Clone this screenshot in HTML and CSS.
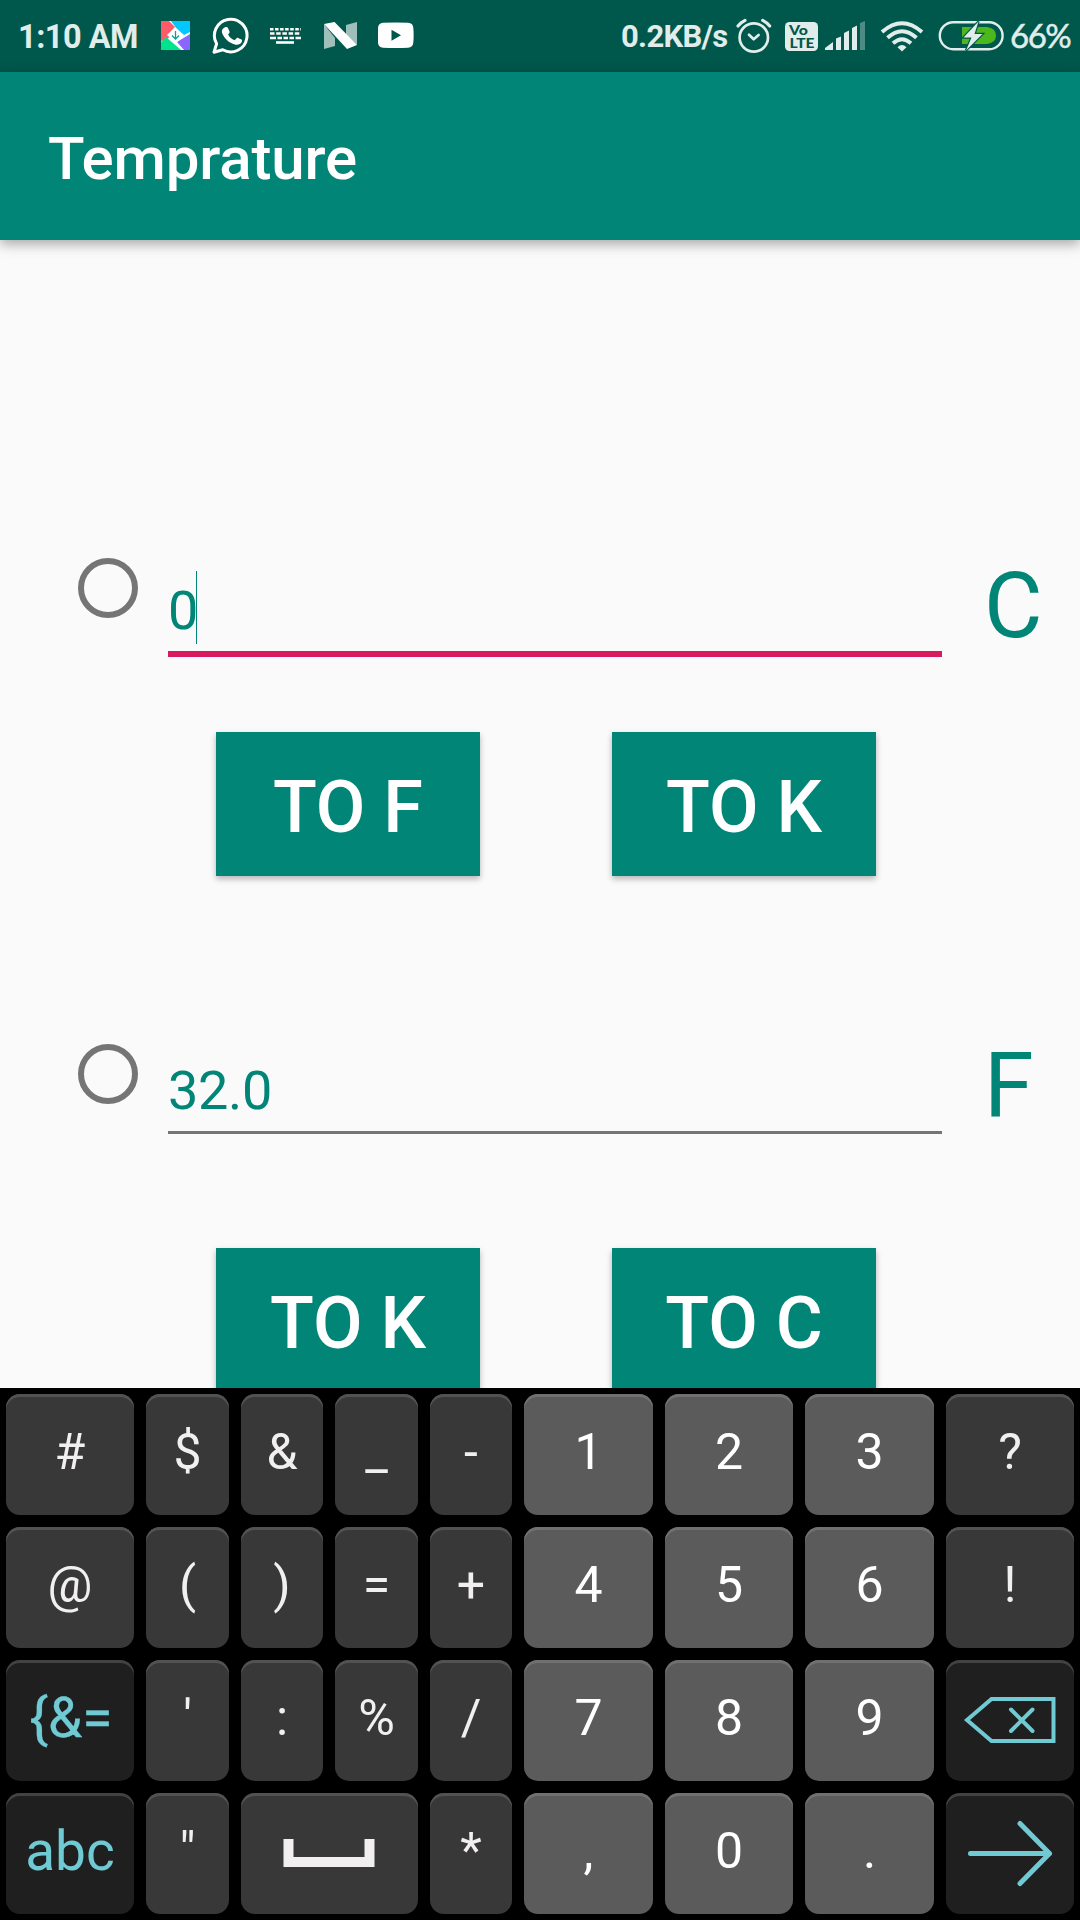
FILE: index.html
```html
<!DOCTYPE html>
<html lang="en">
<head>
<meta charset="utf-8">
<title>Temprature</title>
<link rel="stylesheet" href="styles.css">
</head>
<body>
<div class="screen">
  <div class="status">
    <span class="clock">1:10 AM</span>
    <svg class="icon-files" width="30" height="72" viewBox="161 0 30 72">
      <path fill="#fff" d="M161 21h29v29h-29z"/>
      <path fill="#ff5a68" d="M161 21h8l9 9-12 10-5 1z"/>
      <path fill="#00c8ff" d="M171 21h19v11l-8 4z"/>
      <path fill="#8b65ff" d="M190 34v16h-6l-7-8z"/>
      <path fill="#00e38d" d="M161 42l5-5 15 13h-20z"/>
      <path fill="#fff" d="M175 27l9 8-8 8-9-8z"/>
      <path fill="none" stroke="#00a69b" stroke-width="1.3" d="M175.500 31v8M172 35.500l3.500 3.500 3.500-3.500"/>
    </svg>
    <svg class="icon-chat" width="38" height="72" viewBox="212 0 38 72">
      <path fill="none" stroke="#fff" stroke-width="3" stroke-linejoin="round" d="M214 52.200l2.600-8.500a16.300 16.300 0 1 1 6.200 6.100z"/>
      <path fill="#fff" d="M225 27.300c1.500-.8 2.500-.4 3 .7l1.500 3.500c.4 1-.1 1.600-1.400 3 1.500 2.800 3.500 4.600 6.500 5.800l2-2.100c.4-.5.9-.6 1.500-.3l3.400 1.700c.8.500.6 1.500.2 2.500-1 2.200-3.600 3.100-6 2.600-6.300-1.300-11.500-6-13.600-11.700-.8-2.300.7-4.800 2.900-5.700z"/>
    </svg>
    <svg class="icon-keys" width="32" height="72" viewBox="270 0 32 72" fill="none" stroke="#fff" stroke-width="2.600">
      <path stroke-dasharray="3.500 1.550" d="M270 29.300h31"/>
      <path stroke-dasharray="4.500 1.700" d="M270 33.500h31"/>
      <path stroke-dasharray="6 1.500 4.500 1.500 4.500 1.500 4.500 1.500 6" d="M270 38h31"/>
      <path d="M276 42.500h18"/>
    </svg>
    <svg class="icon-n" width="34" height="72" viewBox="324 0 34 72" fill="#fff">
      <path opacity=".62" d="M324 24l11 14v8l-11 3zM346 25l11-3v23l-11-10z"/>
      <path d="M324 24l10.500-2 22.500 23-10 4z"/>
    </svg>
    <svg class="icon-play" width="36" height="72" viewBox="378 0 36 72">
      <path fill="#fff" d="M383 22.800q12.500-.8 25 0 5 .2 5.300 5 .7 7.500 0 15-.4 4.600-5.300 4.900-12.500.8-25 0-4.600-.3-5-4.900-.7-7.500 0-15 .4-4.700 5-5z"/>
      <path fill="#00574b" d="M391.500 29.800l9.500 5.400-9.500 5.500z"/>
    </svg>
    <span class="speed">0.2KB/s</span>
    <svg class="icon-alarm" width="36" height="72" viewBox="736 0 36 72" fill="none" stroke="#e0edeb" stroke-width="2.700" stroke-linecap="round" stroke-linejoin="round">
      <circle cx="753.800" cy="37.500" r="14.200"/>
      <path d="M749 34.800l4.700 4.500 4.900-4.300"/>
      <path stroke-width="3.200" d="M738 26q3-3.600 7-5.600M769.700 26q-3-3.600-7-5.600"/>
    </svg>
    <svg class="icon-volte" width="34" height="72" viewBox="785 0 34 72">
      <rect x="785" y="22" width="33" height="29" rx="4.500" fill="#e0edeb"/>
      <text class="volte-text" x="789" y="34.800" textLength="19" lengthAdjust="spacingAndGlyphs">Vo</text>
      <text class="volte-text" x="789.500" y="47.800" textLength="25" lengthAdjust="spacingAndGlyphs">LTE</text>
    </svg>
    <svg class="icon-signal" width="41" height="72" viewBox="825 0 41 72" fill="#e0edeb">
      <path d="M825 50v-2l8-6v8zM836 50v-11.500l5-2v13.500zM844 50v-17l5-2.500v19.500zM852 50v-22l5-2.500v24.500z"/>
      <path opacity=".35" d="M860 50v-27l5-2v29z"/>
    </svg>
    <svg class="icon-wifi" width="44" height="72" viewBox="880 0 44 72" fill="none" stroke="#e0edeb" stroke-width="3.900">
      <path d="M882 32q20-17.500 40 0M887.500 37.800q14.500-13.200 29 0M893 43.300q9-8.200 18 0"/>
      <path fill="#e0edeb" stroke="none" d="M897.500 47.200q4.500-4.400 9 0l-4.500 4.200z"/>
    </svg>
    <svg class="icon-battery" width="66" height="72" viewBox="938 0 66 72">
      <rect x="939.800" y="22.200" width="62.800" height="27" rx="13.500" fill="none" stroke="#e0edeb" stroke-width="2.400"/>
      <path fill="#4cb81e" d="M962 27h25q9 1 9 8.500t-9 8.500h-25z"/>
      <path fill="#e0edeb" stroke="#00574b" stroke-width="2.400" paint-order="stroke" d="M978.500 21.500L963.500 37.500h8l-5.500 13 16.500-16.500h-8z"/>
    </svg>
    <span class="percent">66%</span>
  </div>
  <header class="appbar"><h1 class="title">Temprature</h1></header>
  <main class="content">
    <div class="entry entry-celsius">
      <span class="radio"></span>
      <div class="field field-active"><span class="value">0</span><span class="caret"></span></div>
      <span class="unit">C</span>
    </div>
    <div class="actions actions-celsius">
      <button class="action">TO F</button>
      <button class="action">TO K</button>
    </div>
    <div class="entry entry-fahrenheit">
      <span class="radio"></span>
      <div class="field"><span class="value">32.0</span></div>
      <span class="unit">F</span>
    </div>
    <div class="actions actions-fahrenheit">
      <button class="action">TO K</button>
      <button class="action">TO C</button>
    </div>
  </main>
  <div class="keyboard">
    <span class="key">#</span><span class="key">$</span><span class="key">&amp;</span><span class="key">_</span><span class="key">-</span><span class="key digit">1</span><span class="key digit">2</span><span class="key digit">3</span><span class="key">?</span>
    <span class="key">@</span><span class="key">(</span><span class="key">)</span><span class="key">=</span><span class="key">+</span><span class="key digit">4</span><span class="key digit">5</span><span class="key digit">6</span><span class="key">!</span>
    <span class="key mode symbols">{&amp;=</span><span class="key">'</span><span class="key">:</span><span class="key">%</span><span class="key">/</span><span class="key digit">7</span><span class="key digit">8</span><span class="key digit">9</span>
    <span class="key mode graphic">
      <svg width="128" height="121" viewBox="946 1660 128 121" fill="none" stroke="#70cad4" stroke-width="4">
        <path d="M967 1720l24.500-21h62v42h-62z"/>
        <path stroke-linecap="round" d="M1011 1709.500l21.500 21.500M1032.500 1709.500l-21.500 21.500"/>
      </svg>
    </span>
    <span class="key mode">abc</span><span class="key">"</span>
    <span class="key space graphic">
      <svg width="177" height="121" viewBox="241 1793 177 121" fill="none" stroke="#f1eff0" stroke-width="10">
        <path d="M288.500 1839v23h81v-23"/>
      </svg>
    </span>
    <span class="key">*</span><span class="key digit">,</span><span class="key digit">0</span><span class="key digit">.</span>
    <span class="key mode graphic">
      <svg width="128" height="121" viewBox="946 1793 128 121" fill="none" stroke="#70cad4" stroke-width="5" stroke-linecap="round" stroke-linejoin="round">
        <path d="M970.500 1853.500h79M1020 1823.500l29.500 30-29.500 30"/>
      </svg>
    </span>
  </div>
</div>
</body>
</html>
```
FILE: styles.css
```css
* {
  box-sizing: border-box;
}

body {
  margin: 0;
  font-family: Roboto, "Liberation Sans", sans-serif;
}

.screen {
  display: flex;
  flex-direction: column;
  width: 1080px;
  height: 1920px;
  overflow: hidden;
  background: #fafafa;
}

/* Status bar */
.status {
  display: flex;
  flex: none;
  height: 72px;
  background: #00574b;
  color: #e0edeb;
  line-height: 72px;
  white-space: nowrap;
}

.status svg {
  flex: none;
}

.clock {
  width: 142px;
  padding: 1px 0 0 18px;
  font-size: 32.5px;
  font-weight: 700;
  letter-spacing: -0.5px;
  flex: none;
}

.icon-files {
  margin-left: 19px;
}

.icon-chat {
  margin-left: 21px;
}

.icon-keys {
  margin-left: 20px;
}

.icon-n {
  margin-left: 22px;
}

.icon-play {
  margin-left: 20px;
}

.speed {
  width: 115px;
  margin-left: 207px;
  padding-top: 1px;
  font-size: 31px;
  font-weight: 700;
  letter-spacing: -0.7px;
  flex: none;
}

.icon-volte {
  margin-left: 13px;
}

.volte-text {
  fill: #00574b;
  font-family: Lato, sans-serif;
  font-size: 13.5px;
  font-weight: 900;
}

.icon-signal {
  margin-left: 6px;
}

.icon-wifi,
.icon-battery {
  margin-left: 14px;
}

.percent {
  margin-left: 6px;
  font-family: Lato, sans-serif;
  font-size: 33px;
  letter-spacing: -1.5px;
  line-height: 71px;
  -webkit-text-stroke: 0.5px #e0edeb;
}

/* App bar */
.appbar {
  position: relative;
  flex: none;
  height: 168px;
  padding: 3px 48px 0;
  background: #008577;
  box-shadow: 0 4px 12px rgba(0, 0, 0, 0.34);
}

.title {
  margin: 0;
  color: #fff;
  font-size: 60px;
  font-weight: 500;
  letter-spacing: -0.15px;
  line-height: 168px;
}

/* Converter form */
.content {
  flex: none;
  height: 1148px;
  overflow: hidden;
  color: #008577;
}

.entry {
  display: flex;
  align-items: flex-start;
  padding-left: 78px;
}

.entry-celsius {
  height: 99px;
  margin-top: 318px;
}

.entry-fahrenheit {
  height: 90px;
  margin-top: 168px;
}

.radio {
  width: 60px;
  height: 60px;
  border: 6px solid #757575;
  border-radius: 50%;
}

.field {
  display: flex;
  align-items: flex-start;
  width: 774px;
  height: 90px;
  margin-left: 30px;
  padding-top: 7px;
  border-bottom: 3px solid #757575;
  font-size: 54px;
  letter-spacing: -0.3px;
  line-height: 79px;
}

.field-active {
  height: 99px;
  padding-top: 13px;
  border-bottom: 6px solid #d81b60;
}

.caret {
  width: 1px;
  height: 73px;
  margin-left: -2px;
  background: #008577;
}

.unit {
  margin-left: 42px;
  padding-top: 3px;
  font-size: 90px;
  line-height: 80px;
}

.entry-celsius .unit {
  padding-top: 9px;
}

.actions {
  display: flex;
  gap: 132px;
  padding-left: 216px;
}

.actions-celsius {
  margin-top: 75px;
}

.actions-fahrenheit {
  margin-top: 114px;
}

.action {
  width: 264px;
  height: 144px;
  padding: 8px 0 0;
  border: 0;
  background: #008577;
  box-shadow: 0 3px 6px rgba(0, 0, 0, 0.28);
  color: #fff;
  font-family: inherit;
  font-size: 72px;
  font-weight: 500;
  line-height: 136px;
}

/* Keyboard */
.keyboard {
  display: grid;
  flex: none;
  grid-template-columns: 128px 83px 82px 83px 82px 129px 128px 129px 128px;
  grid-auto-rows: 121px;
  gap: 12px;
  height: 532px;
  padding: 6px;
  background: #000;
}

.key {
  height: 121px;
  border-radius: 14px;
  background: #383838;
  box-shadow: inset 0 3px 0 #525252;
  color: #f1eff0;
  font-size: 50px;
  line-height: 116px;
  text-align: center;
}

.digit {
  background: #5b5b5b;
  box-shadow: inset 0 3px 0 #707070;
  color: #fff;
}

.mode {
  background: #1f1f1f;
  box-shadow: inset 0 3px 0 #424242;
  color: #70cad4;
  font-size: 55px;
  line-height: 117px;
}

.symbols {
  padding-left: 2px;
  -webkit-text-stroke: 0.3px #70cad4;
}

.graphic {
  display: flex;
}

.space {
  grid-column: span 2;
}
```
